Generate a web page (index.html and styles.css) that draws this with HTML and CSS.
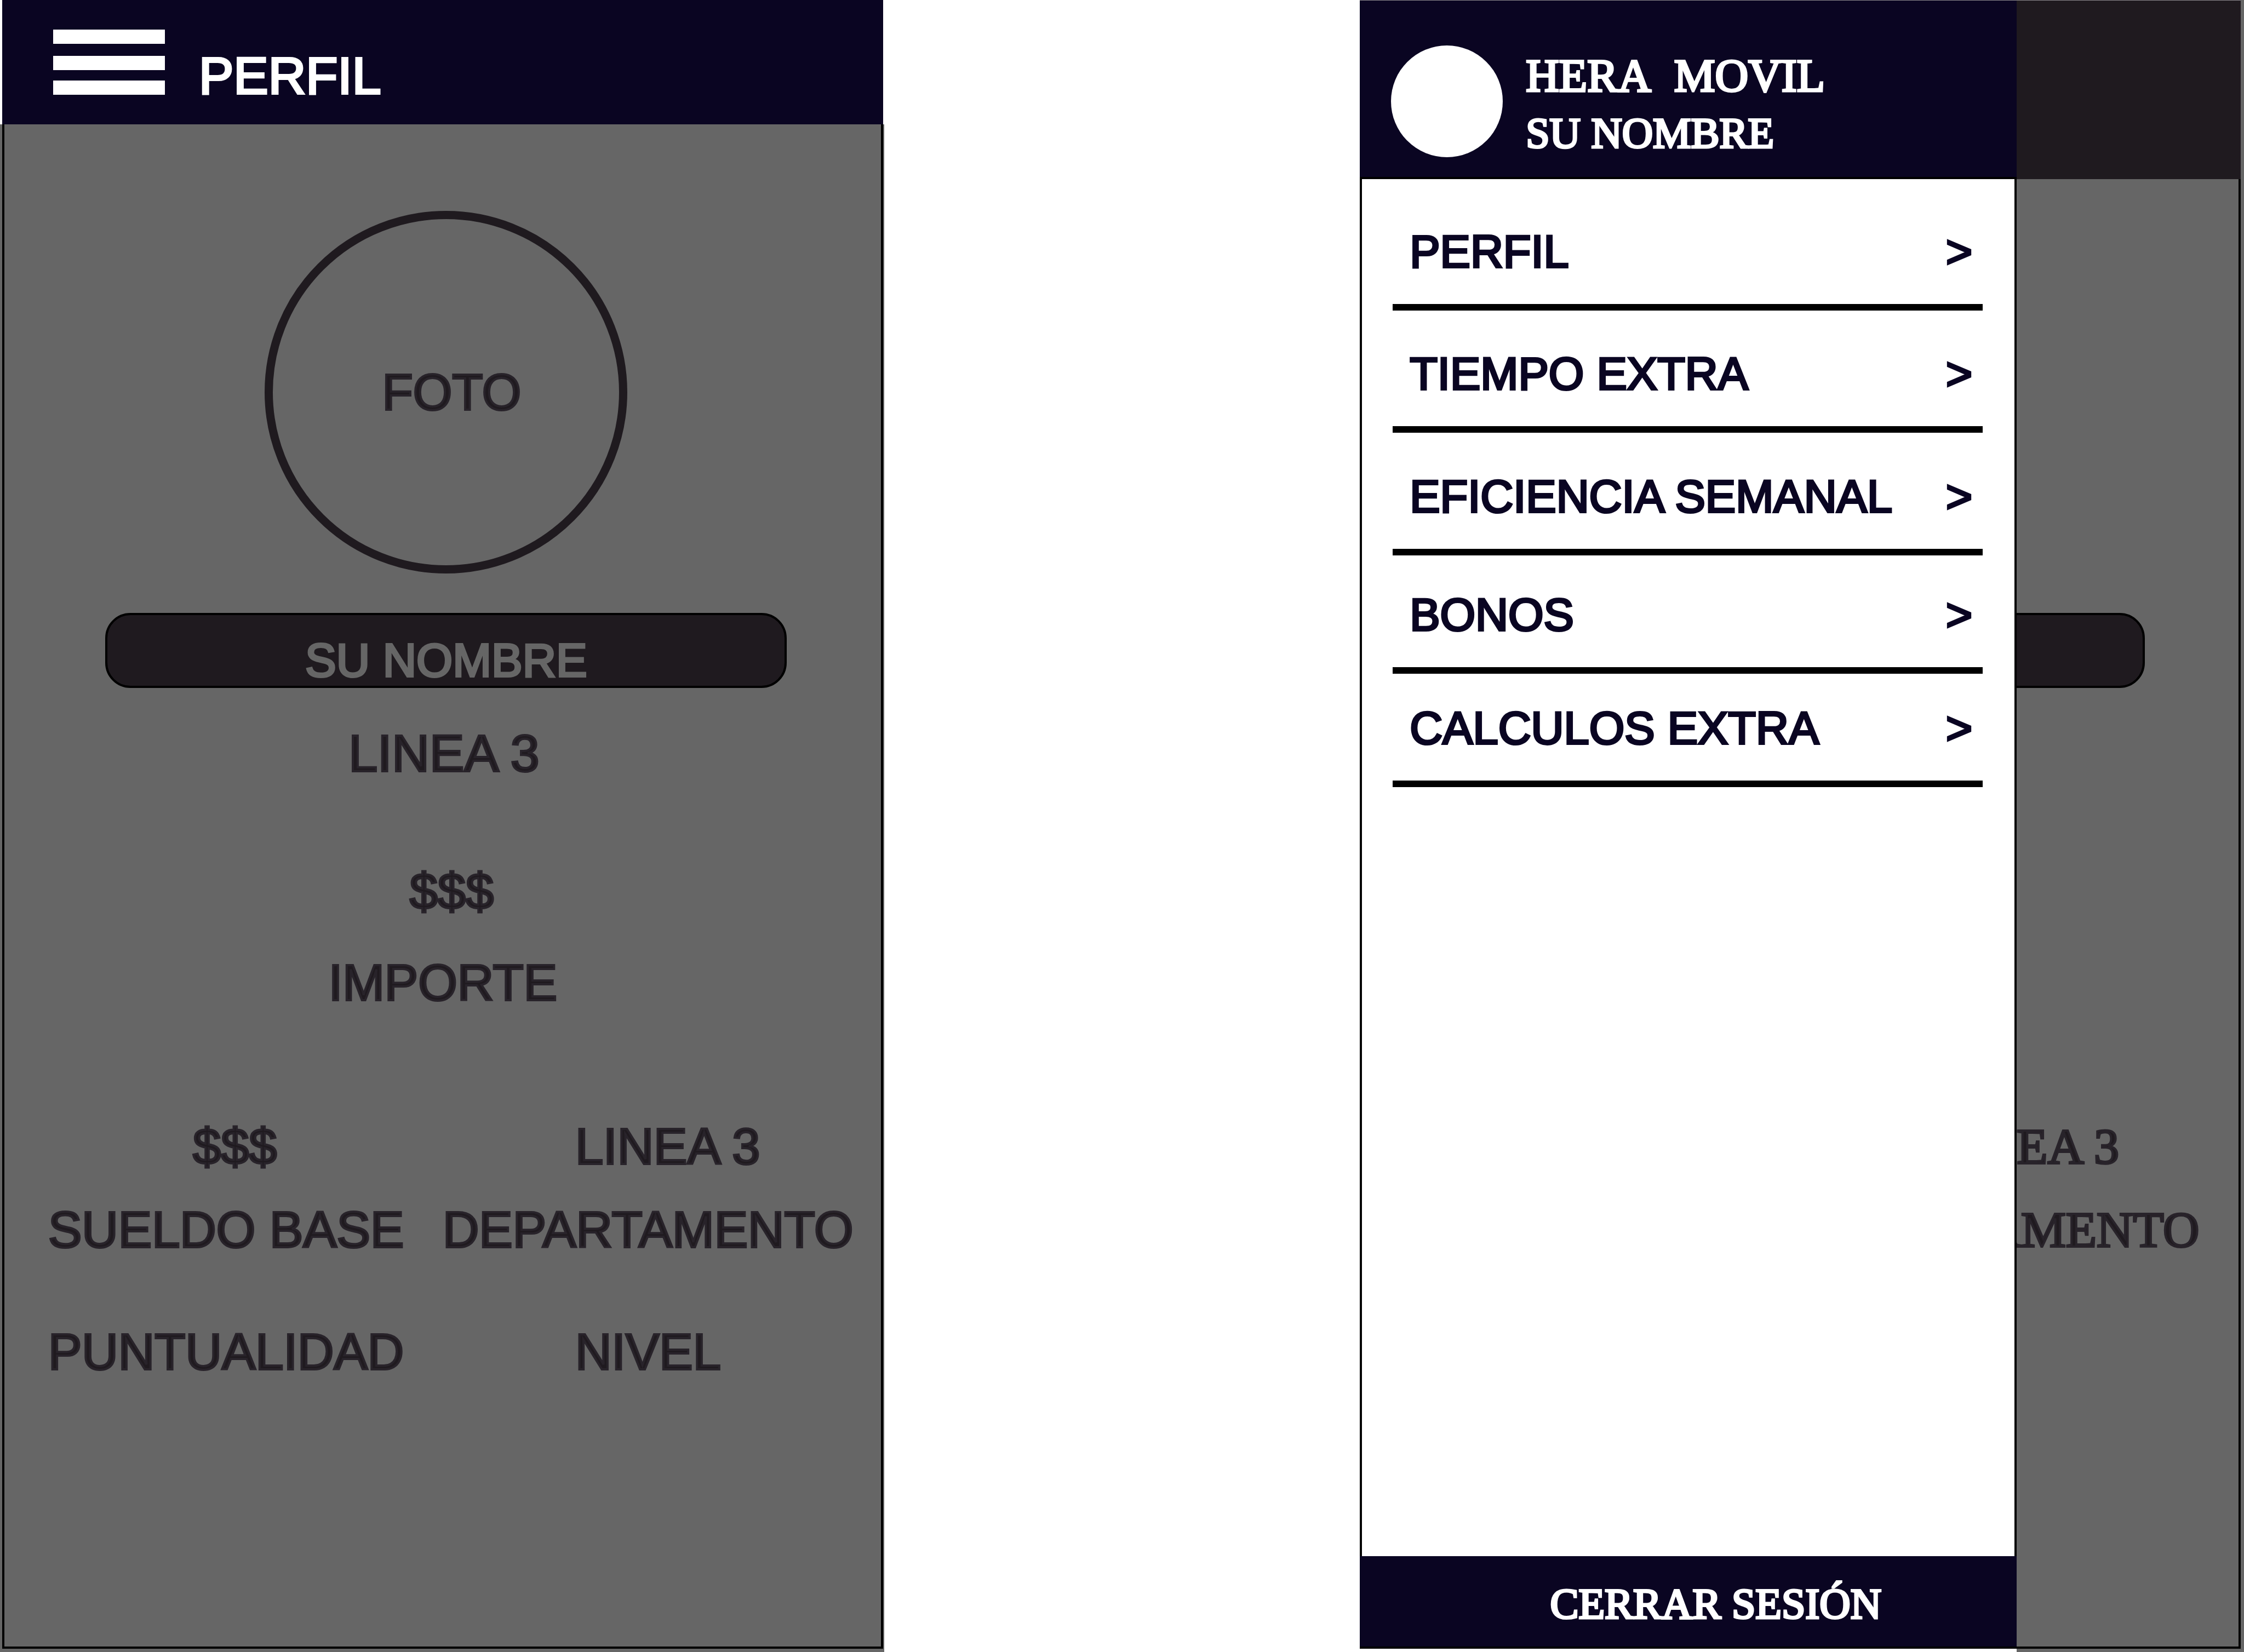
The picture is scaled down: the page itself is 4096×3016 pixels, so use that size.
FILE: index.html
```html
<!DOCTYPE html>
<html lang="es">
<head>
  <meta charset="utf-8">
  <meta name="viewport" content="width=device-width, initial-scale=1">
  <title>Hera Movil</title>
  <link rel="stylesheet" href="styles.css">
</head>
<body>
  <main class="board">
    <section class="phone" aria-label="Perfil">
      <header class="topbar">
        <button class="menu-button" type="button" aria-label="Menu">
          <svg class="menu-icon" viewBox="0 0 204 119" aria-hidden="true">
            <rect width="204" height="26"/>
            <rect y="48" width="204" height="26"/>
            <rect y="93" width="204" height="26"/>
          </svg>
        </button>
        <h1 class="topbar-title">PERFIL</h1>
      </header>
      <div class="screen">
        <div class="frame">
          <div class="summary">
            <div class="photo">FOTO</div>
            <div class="name-pill">SU NOMBRE</div>
            <p class="line-name">LINEA 3</p>
            <p class="amount">$$$</p>
            <p class="amount-label">IMPORTE</p>
          </div>
          <div class="stats">
            <p class="stat-value">$$$</p>
            <p class="stat-value stat-second">LINEA 3</p>
            <p class="stat-label">SUELDO BASE</p>
            <p class="stat-label">DEPARTAMENTO</p>
            <p class="stat-extra">PUNTUALIDAD</p>
            <p class="stat-extra stat-second">NIVEL</p>
          </div>
        </div>
      </div>
    </section>

    <section class="phone phone-open" aria-label="Menu">
      <div class="topbar-dimmed"></div>
      <div class="screen">
        <div class="frame frame-behind">
          <div class="summary">
            <div class="name-pill"></div>
          </div>
          <div class="stats stats-serif">
            <p class="stat-value stat-second">LINEA 3</p>
            <p class="stat-label stat-column">DEPARTAMENTO</p>
          </div>
        </div>
      </div>

      <aside class="drawer">
        <header class="drawer-header">
          <div class="avatar"></div>
          <div class="identity">
            <h2 class="app-name">HERA&nbsp; MOVIL</h2>
            <p class="user-name">SU NOMBRE</p>
          </div>
        </header>
        <nav class="drawer-body">
          <ul class="menu">
            <li class="menu-item"><a class="menu-link" href="#perfil"><span>PERFIL</span><span>&gt;</span></a></li>
            <li class="menu-item"><a class="menu-link" href="#tiempo"><span>TIEMPO EXTRA</span><span>&gt;</span></a></li>
            <li class="menu-item"><a class="menu-link" href="#eficiencia"><span>EFICIENCIA SEMANAL</span><span>&gt;</span></a></li>
            <li class="menu-item"><a class="menu-link" href="#bonos"><span>BONOS</span><span>&gt;</span></a></li>
            <li class="menu-item"><a class="menu-link" href="#calculos"><span>CALCULOS EXTRA</span><span>&gt;</span></a></li>
          </ul>
        </nav>
        <button class="logout" type="button">CERRAR SESIÓN</button>
      </aside>
    </section>
  </main>
</body>
</html>
```

FILE: styles.css
```css
:root {
  --navy: #0a0522;
  --ink: #1f1a1f;
  --ink-edge: #28232a;
  --shade: #666666;
  --sans: "Liberation Sans", Arial, sans-serif;
  --serif: "Liberation Serif", "Times New Roman", serif;
}

*,
*::before,
*::after {
  box-sizing: border-box;
}

body,
h1,
h2,
p,
ul {
  margin: 0;
  padding: 0;
}

h1,
h2 {
  font-weight: 400;
}

ul {
  list-style: none;
}

button {
  border: 0;
  padding: 0;
  background: none;
  cursor: pointer;
}

body {
  background: #ffffff;
  color: var(--ink);
  font-family: var(--sans);
  font-size: 92px;
  line-height: 100px;
  -webkit-text-stroke: 4px currentColor;
}

.board {
  display: grid;
  grid-template-columns: 1614fr 1614fr;
  column-gap: 21.2%;
  min-height: 100vh;
}

.phone {
  display: flex;
  flex-direction: column;
  position: relative;
  min-width: 0;
}

/* Profile screen */

.topbar {
  display: flex;
  align-items: flex-end;
  gap: 62px;
  height: 227px;
  margin: 0 2px 0 4px;
  padding: 0 93px 54px;
  background: var(--navy);
  color: #ffffff;
}

.menu-button {
  width: 204px;
  height: 119px;
}

.menu-icon {
  display: block;
  width: 100%;
  height: 100%;
  fill: #ffffff;
  stroke: none;
}

.topbar-title {
  font-size: 95px;
  line-height: 70px;
}

.screen {
  display: flex;
  flex: 1;
  padding: 0 2px 6px 4px;
  background: var(--shade);
}

.frame {
  flex: 1;
  min-width: 0;
  padding-top: 158px;
  border: 4px solid #000000;
  border-top: 0;
  -webkit-text-stroke-color: var(--ink-edge);
}

.summary {
  display: flex;
  flex-direction: column;
  align-items: center;
  padding-left: 13px;
}

.photo {
  display: flex;
  align-items: center;
  justify-content: center;
  width: 662px;
  height: 662px;
  margin-bottom: 72px;
  padding-left: 20px;
  border: 15px solid var(--ink);
  border-radius: 50%;
}

.name-pill {
  display: flex;
  align-items: flex-end;
  justify-content: center;
  width: 1244px;
  max-width: 100%;
  height: 137px;
  border: 4px solid #000000;
  border-radius: 46px;
  background: var(--ink);
  color: var(--shade);
  font-size: 85px;
  line-height: 92px;
  -webkit-text-stroke-color: var(--shade);
}

.line-name {
  margin-top: 69px;
  padding-right: 8px;
  font-size: 95px;
}

.amount {
  margin-top: 152px;
  padding-left: 20px;
}

.amount-label {
  margin-top: 67px;
  padding-right: 12px;
}

.stats {
  display: grid;
  grid-template-columns: 1fr 1fr;
  margin-top: 199px;
  white-space: nowrap;
}

.stat-value {
  padding-left: 344px;
}

.stat-label,
.stat-extra {
  margin-top: 52px;
  padding-left: 80px;
}

.stat-extra {
  margin-top: 123px;
}

.stat-label:nth-child(even) {
  padding-left: 0;
}

.stat-second {
  grid-column: 2;
  padding-left: 242px;
}

/* Profile screen seen behind the open drawer */

.topbar-dimmed {
  height: 327px;
  margin-right: 6px;
  border-top: 1px solid #8a888c;
  background: var(--ink);
}

.phone-open {
  background: var(--shade);
}

.phone-open .screen {
  padding: 0 6px 6px 0;
}

.frame-behind {
  padding-top: 792px;
}

.stats-serif {
  margin-top: 787px;
  font-family: var(--serif);
}

.stat-column {
  grid-column: 2;
}

/* Drawer */

.drawer {
  display: flex;
  flex-direction: column;
  position: absolute;
  inset: 0 auto 0 0;
  width: 74.3%;
  padding-bottom: 6px;
  background: #ffffff;
  color: var(--navy);
}

.drawer-header {
  display: flex;
  gap: 42px;
  height: 323px;
  padding: 82px 57px 0;
  border-top: 1px solid #8a888c;
  background: var(--navy);
  color: #ffffff;
  font-family: var(--serif);
  line-height: 104px;
}

.avatar {
  flex: none;
  width: 204px;
  height: 204px;
  border-radius: 50%;
  background: #ffffff;
}

.identity {
  padding-top: 4px;
}

.app-name {
  font-size: 84px;
}

.user-name {
  font-size: 78px;
}

.drawer-body {
  flex: 1;
  padding: 0 58px 0 56px;
  border: 4px solid #000000;
  border-bottom: 0;
}

.menu {
  display: grid;
  grid-template-rows: 240px 223px 224px 216px 207px;
}

.menu-item {
  display: flex;
  align-items: flex-end;
  border-bottom: 12px solid #000000;
}

.menu-link {
  display: flex;
  flex: 1;
  justify-content: space-between;
  padding: 0 19px 45px 31px;
  color: inherit;
  font-size: 83px;
  text-decoration: none;
}

.logout {
  height: 169px;
  padding: 8px 0 0 100px;
  border-bottom: 4px solid #000000;
  background: var(--navy);
  color: #ffffff;
  font-family: var(--serif);
  font-size: 78px;
  line-height: 100px;
  -webkit-text-stroke: 4px #ffffff;
}
```
